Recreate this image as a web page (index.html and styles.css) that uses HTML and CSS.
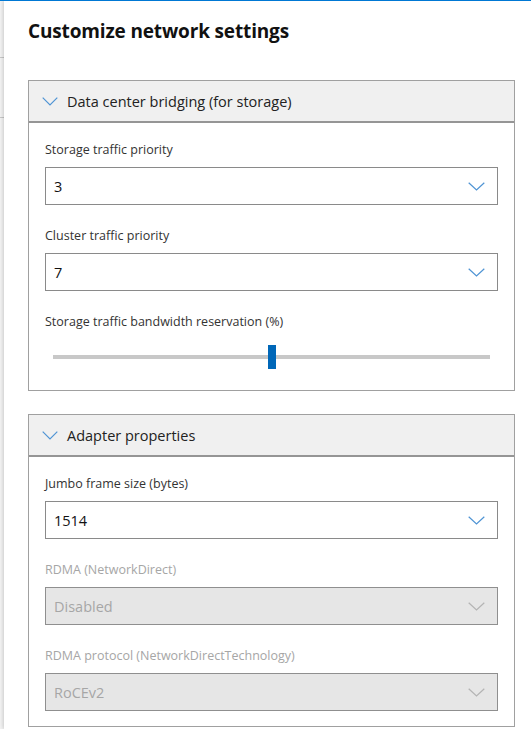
FILE: index.html
```html
<!DOCTYPE html>
<html lang="en">
<head>
<meta charset="utf-8">
<title>Customize network settings</title>
<link rel="stylesheet" href="styles.css">
</head>
<body>
<div class="page">
  <div class="backdrop">
    <div class="bd-row bd-row-1"></div>
    <div class="bd-row bd-row-2"></div>
  </div>
  <main class="panel">
    <h1 class="title">Customize network settings</h1>

    <section class="group">
      <div class="group-header">
        <svg class="chev-h" width="16" height="9" viewBox="0 0 16 9"><polyline points="0.7,0.7 8,8 15.3,0.7" fill="none" stroke="#4f94d4" stroke-width="1.2"/></svg>
        <span>Data center bridging (for storage)</span>
      </div>
      <div class="group-body">
        <div class="field">
          <label class="label">Storage traffic priority</label>
          <div class="select"><span class="value">3</span>
            <svg class="chev" width="17" height="9" viewBox="0 0 17 9"><polyline points="0.7,0.7 8.5,8 16.3,0.7" fill="none" stroke="#4f94d4" stroke-width="1.2"/></svg>
          </div>
        </div>
        <div class="field">
          <label class="label">Cluster traffic priority</label>
          <div class="select"><span class="value">7</span>
            <svg class="chev" width="17" height="9" viewBox="0 0 17 9"><polyline points="0.7,0.7 8.5,8 16.3,0.7" fill="none" stroke="#4f94d4" stroke-width="1.2"/></svg>
          </div>
        </div>
        <div class="field">
          <label class="label">Storage traffic bandwidth reservation (%)</label>
          <div class="slider">
            <div class="track"><div class="thumb" style="left: 50%"></div></div>
          </div>
        </div>
      </div>
    </section>

    <section class="group">
      <div class="group-header">
        <svg class="chev-h" width="16" height="9" viewBox="0 0 16 9"><polyline points="0.7,0.7 8,8 15.3,0.7" fill="none" stroke="#4f94d4" stroke-width="1.2"/></svg>
        <span>Adapter properties</span>
      </div>
      <div class="group-body group-body-2">
        <div class="field">
          <label class="label">Jumbo frame size (bytes)</label>
          <div class="select"><span class="value">1514</span>
            <svg class="chev" width="17" height="9" viewBox="0 0 17 9"><polyline points="0.7,0.7 8.5,8 16.3,0.7" fill="none" stroke="#4f94d4" stroke-width="1.2"/></svg>
          </div>
        </div>
        <div class="field disabled">
          <label class="label">RDMA (NetworkDirect)</label>
          <div class="select"><span class="value">Disabled</span>
            <svg class="chev" width="17" height="9" viewBox="0 0 17 9"><polyline points="0.7,0.7 8.5,8 16.3,0.7" fill="none" stroke="#b4b4b4" stroke-width="1.2"/></svg>
          </div>
        </div>
        <div class="field disabled">
          <label class="label">RDMA protocol (NetworkDirectTechnology)</label>
          <div class="select"><span class="value">RoCEv2</span>
            <svg class="chev" width="17" height="9" viewBox="0 0 17 9"><polyline points="0.7,0.7 8.5,8 16.3,0.7" fill="none" stroke="#b4b4b4" stroke-width="1.2"/></svg>
          </div>
        </div>
      </div>
    </section>
  </main>
</div>
</body>
</html>
```
FILE: styles.css
```css
* { box-sizing: border-box; }
html, body { margin: 0; padding: 0; }
body {
  font-family: "Open Sans", "Noto Sans", "Liberation Sans", sans-serif;
  color: #000;
  background: #fff;
  overflow: hidden;
}
.page {
  display: flex;
  width: 531px;
  height: 729px;
  border-top: 1px solid #0078d4;
  overflow: hidden;
}
.backdrop {
  width: 4px;
  flex: none;
  background: #f4f4f4;
  display: flex;
  flex-direction: column;
}
.bd-row { border-bottom: 1px solid #c8c8c8; }
.bd-row-1 { height: 57px; }
.bd-row-2 { height: 60px; }
.panel {
  flex: 1;
  background: #fff;
  box-shadow: -1px 0 4px rgba(0,0,0,0.18);
  padding: 0 16px 0 24px;
  position: relative;
}
.title {
  margin: 0;
  padding: 17px 0 0;
  height: 79px;
  font-size: 19px;
  font-weight: 700;
  line-height: 26px;
  color: #111;
  letter-spacing: -0.15px;
}
.group {
  border: 1px solid #a0a0a0;
  margin-bottom: 23px;
}
.group-header {
  height: 42px;
  background: #f0f0f0;
  border-bottom: 2px solid #959595;
  display: flex;
  align-items: center;
  padding-left: 13px;
  font-size: 14.5px;
  color: #222;
}
.chev-h { margin-right: 9px; margin-top: 1px; }
.group-body {
  padding: 18px 16px 21px;
  display: flex;
  flex-direction: column;
  gap: 22px;
}
.group-body-2 { padding-bottom: 15px; }
.field { display: flex; flex-direction: column; }
.label {
  font-size: 12.5px;
  line-height: 18px;
  color: #333;
  margin-bottom: 8px;
}
.select {
  height: 38px;
  border: 1px solid #8a8a8a;
  display: flex;
  align-items: center;
  justify-content: space-between;
  padding: 0 12px 0 8px;
  font-size: 14.5px;
  color: #111;
}
.chev { margin-top: 1px; }
.disabled .label { color: #a6a6a6; }
.disabled .select { background: #e6e6e6; color: #a6a6a6; border-color: #8f8f8f; }
.slider {
  height: 24px;
  margin-top: 6px;
  padding: 0 8px;
  display: flex;
  align-items: center;
}
.track {
  flex: 1;
  height: 4px;
  background: #c8c8c8;
  position: relative;
}
.thumb {
  position: absolute;
  top: -10px;
  width: 8px;
  height: 24px;
  margin-left: -4px;
  background: #0067b8;
}
```
